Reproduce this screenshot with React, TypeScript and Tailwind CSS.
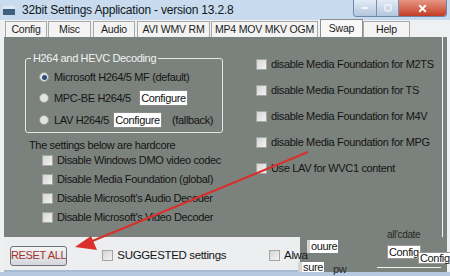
import { Minus, Square, X } from "lucide-react";

function Check({ label, className = "" }: { label: string; className?: string }) {
  return (
    <div className={`flex items-center gap-[4px] h-[13px] ${className}`}>
      <span className="w-[11px] h-[11px] border border-[#a4a6a4] bg-gradient-to-br from-[#d4d6d4] to-[#f2f2f2] shrink-0" />
      <span className="whitespace-nowrap">{label}</span>
    </div>
  );
}

function Radio({ checked = false }: { checked?: boolean }) {
  return (
    <span className="w-[10px] h-[10px] rounded-full border border-[#9a9c9a] bg-[#e2e4e2] flex items-center justify-center shrink-0">
      {checked && <span className="w-[5px] h-[5px] rounded-full bg-[#2b4f7e]" />}
    </span>
  );
}

function ConfigButton() {
  return (
    <span className="h-[16px] w-[49px] flex items-center justify-center bg-white border border-[#8a8a8a] text-[#111] text-[11px] whitespace-nowrap">
      Configure
    </span>
  );
}

export default function App() {
  const tabs = [
    { name: "Config", cls: "w-[42px] ml-[1px]" },
    { name: "Misc", cls: "w-[43px] ml-[1px]" },
    { name: "Audio", cls: "w-[42px] ml-[2px]" },
    { name: "AVI WMV RM", cls: "w-[73px] ml-[2px]" },
    { name: "MP4 MOV MKV OGM", cls: "w-[107px] ml-[1px]" },
  ];

  const right = [
    "disable Media Foundation for M2TS",
    "disable Media Foundation for TS",
    "disable Media Foundation for M4V",
    "disable Media Foundation for MPG",
    "Use LAV for WVC1 content",
  ];

  const hardcore = [
    "Disable Windows DMO video codec",
    "Disable Media Foundation (global)",
    "Disable Microsoft's Audio Decoder",
    "Disable Microsoft's Video Decoder",
  ];

  return (
    <div
      className="relative w-[450px] h-[276px] overflow-hidden bg-gradient-to-b from-[#c9dbef] to-[#b4c8df] text-[#1c1c1c]"
      style={{ fontFamily: '"Liberation Sans", Arial, sans-serif' }}
    >
      {/* title bar */}
      <div className="h-[20px] flex items-center pl-[3px]">
        <span className="w-[12px] h-[9px] bg-[#40607f] border-t-[3px] border-[#dfe8f2] mr-[7px]" />
        <span className="text-[12px] tracking-[-0.2px] text-[#101820] leading-none whitespace-nowrap">
          32bit Settings Application - version 13.2.8
        </span>
        <div className="ml-auto flex h-[17px] self-start mr-[3px] rounded-b-[4px] overflow-hidden border border-[#6d87a8] border-t-0">
          <span className="w-[23px] bg-gradient-to-b from-[#e3ecf6] to-[#b3c6dd] flex items-center justify-center border-r border-[#7a90ad]">
            <Minus className="w-[10px] h-[10px] text-white" strokeWidth={4} />
          </span>
          <span className="w-[22px] bg-gradient-to-b from-[#e3ecf6] to-[#b3c6dd] flex items-center justify-center border-r border-[#7a90ad]">
            <Square className="w-[8px] h-[8px] text-white" strokeWidth={3} />
          </span>
          <span className="w-[47px] bg-gradient-to-b from-[#e69684] to-[#c23a24] flex items-center justify-center">
            <X className="w-[11px] h-[11px] text-white" strokeWidth={4} />
          </span>
        </div>
      </div>

      <div className="pl-[4px] pr-[3px] bg-[#eef0f2] h-[252px]">
        {/* tabs */}
        <div className="flex items-end h-[17px] text-[10.5px] tracking-[-0.2px] whitespace-nowrap">
          {tabs.map((t) => (
            <div
              key={t.name}
              className={`${t.cls} h-[16px] bg-[#f3f3f3] border border-b-0 border-[#a8a8a8] flex items-center justify-center`}
            >
              {t.name}
            </div>
          ))}
          <div className="w-[43px] h-[18px] ml-[2px] bg-[#f8f8f8] border border-b-0 border-[#8e8e8e] flex items-center justify-center">
            Swap
          </div>
          <div className="w-[47px] h-[16px] bg-[#f3f3f3] border border-b-0 border-[#a8a8a8] flex items-center justify-center">
            Help
          </div>
        </div>

        {/* panel */}
        <div className="h-[235px] bg-[#7b817c] flex flex-col text-[11px] tracking-[-0.35px] text-[#151515]">
          <div className="h-[200px] flex">
            {/* left column */}
            <div className="w-[252px] pl-[21px] pt-[21px] whitespace-nowrap">
              <div className="relative w-[198px] h-[75px] border border-[#e6e6e6] rounded-[3px] pl-[13px] pt-[10px]">
                <span className="absolute -top-[7px] left-[5px] px-[2px] bg-[#7b817c] text-[#f2f2f2] leading-[13px]">
                  H264 and HEVC Decoding
                </span>
                <div className="flex items-center gap-[5px] h-[16px]">
                  <Radio checked />
                  <span>Microsoft H264/5 MF (default)</span>
                </div>
                <div className="flex items-center gap-[5px] h-[22px] mt-[2px]">
                  <Radio />
                  <span className="w-[80px]">MPC-BE H264/5</span>
                  <ConfigButton />
                </div>
                <div className="flex items-center gap-[5px] h-[22px]">
                  <Radio />
                  <span className="w-[54px]">LAV H264/5</span>
                  <ConfigButton />
                  <span className="ml-[5px]">(fallback)</span>
                </div>
              </div>
              <div className="mt-[6px] ml-[4px] leading-[13px]">The settings below are hardcore</div>
              <div className="ml-[17px] mt-[2px] flex flex-col gap-[6px]">
                {hardcore.map((h) => (
                  <Check key={h} label={h} />
                ))}
              </div>
            </div>
            {/* right column */}
            <div className="flex-1 pt-[21px] flex flex-col gap-[13px] border-r border-[#f4f4f4] mr-[4px]">
              {right.map((r) => (
                <Check key={r} label={r} />
              ))}
            </div>
          </div>

          {/* bottom row */}
          <div className="flex-1 flex whitespace-nowrap">
            <div className="w-[296px] pt-[4px] bg-[#eceef0] border-b-[2px] border-[#a7bcd3] flex items-center">
              <button className="ml-[6px] w-[63px] h-[20px] rounded-[3px] border border-[#6f7378] bg-gradient-to-b from-[#f4f4f4] to-[#d3d7dc] text-[#a3322e] text-[11px] whitespace-nowrap">
                RESET ALL
              </button>
              <Check label="SUGGESTED settings" className="ml-[35px] text-[11.5px]" />
              <Check label="Alwa" className="ml-[43px] text-[11.5px]" />
            </div>
            <div className="relative flex-1 text-[11px]">
              <span className="absolute left-[7px] top-[3px] bg-white px-[1px] leading-[13px] border-l-[3px] border-[#d4d4d4]">ouure</span>
              <span className="absolute left-[-2px] top-[25px] bg-white px-[1px] leading-[10px] border-l-[4px] border-[#d4d4d4]">sure</span>
              <span className="absolute left-[33px] top-[27px] text-[#2a2a2a] leading-[10px]">pw</span>
              <span className="absolute left-[87px] -top-[10px] text-[#2a2a2a] text-[10px]">all'cdate</span>
              <span className="absolute left-[87px] top-[8px] bg-white border border-[#999] px-[1px] leading-[12px]">Config</span>
              <span className="absolute left-[118px] top-[15px] bg-white border border-[#999] px-[1px] leading-[10px]">Config</span>
              <span className="absolute left-[77px] top-[30px] w-[64px] h-[1px] bg-[#f0f0f0]" />
            </div>
          </div>
        </div>
      </div>

      {/* red annotation arrow */}
      <svg className="absolute left-0 top-0 pointer-events-none" width="450" height="276">
        <line x1="308" y1="152" x2="90" y2="242" stroke="#d9302c" strokeWidth="2" />
        <polygon points="75,247 91,236 97,250" fill="#d9302c" />
      </svg>
    </div>
  );
}
